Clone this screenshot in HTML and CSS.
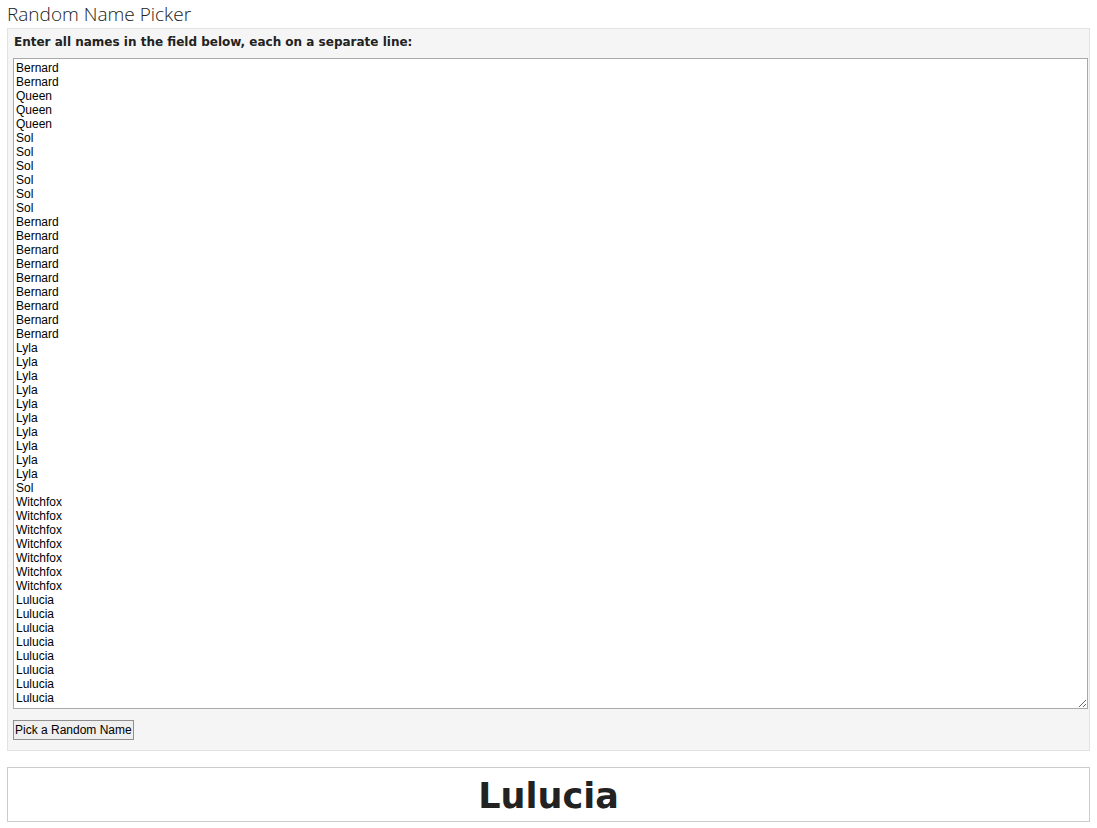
FILE: index.html
```html
<!DOCTYPE html>
<html lang="en">
<head>
    <meta charset="UTF-8">
    <title>Random Name Picker</title>
    <link rel="stylesheet" href="styles.css">
</head>
<body>
    <h1 class="title">Random Name Picker</h1>
    <div class="panel">
        <label for="names" class="names-label">Enter all names in the field below, each on a separate line:</label>
        <textarea id="names" class="names" spellcheck="false">Bernard
Bernard
Queen
Queen
Queen
Sol
Sol
Sol
Sol
Sol
Sol
Bernard
Bernard
Bernard
Bernard
Bernard
Bernard
Bernard
Bernard
Bernard
Lyla
Lyla
Lyla
Lyla
Lyla
Lyla
Lyla
Lyla
Lyla
Lyla
Sol
Witchfox
Witchfox
Witchfox
Witchfox
Witchfox
Witchfox
Witchfox
Lulucia
Lulucia
Lulucia
Lulucia
Lulucia
Lulucia
Lulucia
Lulucia</textarea>
        <button class="pick">Pick a Random Name</button>
    </div>
    <div class="result">Lulucia</div>
</body>
</html>
```

FILE: styles.css
```css
body {
    margin: 0 7px;
    font-family: "Open Sans", "DejaVu Sans", sans-serif;
    color: #222;
    background: #fff;
}
.title {
    margin: 0;
    font-size: 19px;
    font-weight: 300;
    line-height: 28px;
}
.panel {
    background-color: #f5f5f5;
    border: 1px solid #e3e3e3;
    padding: 5px 1px 10px 5px;
}
.names-label {
    display: block;
    font-family: "DejaVu Sans", sans-serif;
    font-weight: bold;
    font-size: 12px;
    color: #222;
    margin: 0 0 7px 1px;
    line-height: 17px;
}
.names {
    display: block;
    width: 100%;
    box-sizing: border-box;
    height: 651px;
    font-family: "Liberation Sans", Arial, sans-serif;
    font-size: 12px;
    line-height: 14px;
    padding: 2px 2px;
    border: 1px solid #a9a9a9;
    color: #000;
    resize: vertical;
    overflow: hidden;
}
.pick {
    margin-top: 11px;
    font-family: "Liberation Sans", Arial, sans-serif;
    font-size: 12px;
    color: #000;
    background-color: #efefef;
    border: 1px solid #8f8f8f;
    padding: 2px 1px;
    height: 20px;
    line-height: 14px;
}
.result {
    margin-top: 16px;
    border: 1px solid #ccc;
    padding-top: 4px;
    height: 49px;
    line-height: 49px;
    text-align: center;
    font-family: "DejaVu Sans", sans-serif;
    font-weight: bold;
    font-size: 35px;
    color: #222;
}
```
